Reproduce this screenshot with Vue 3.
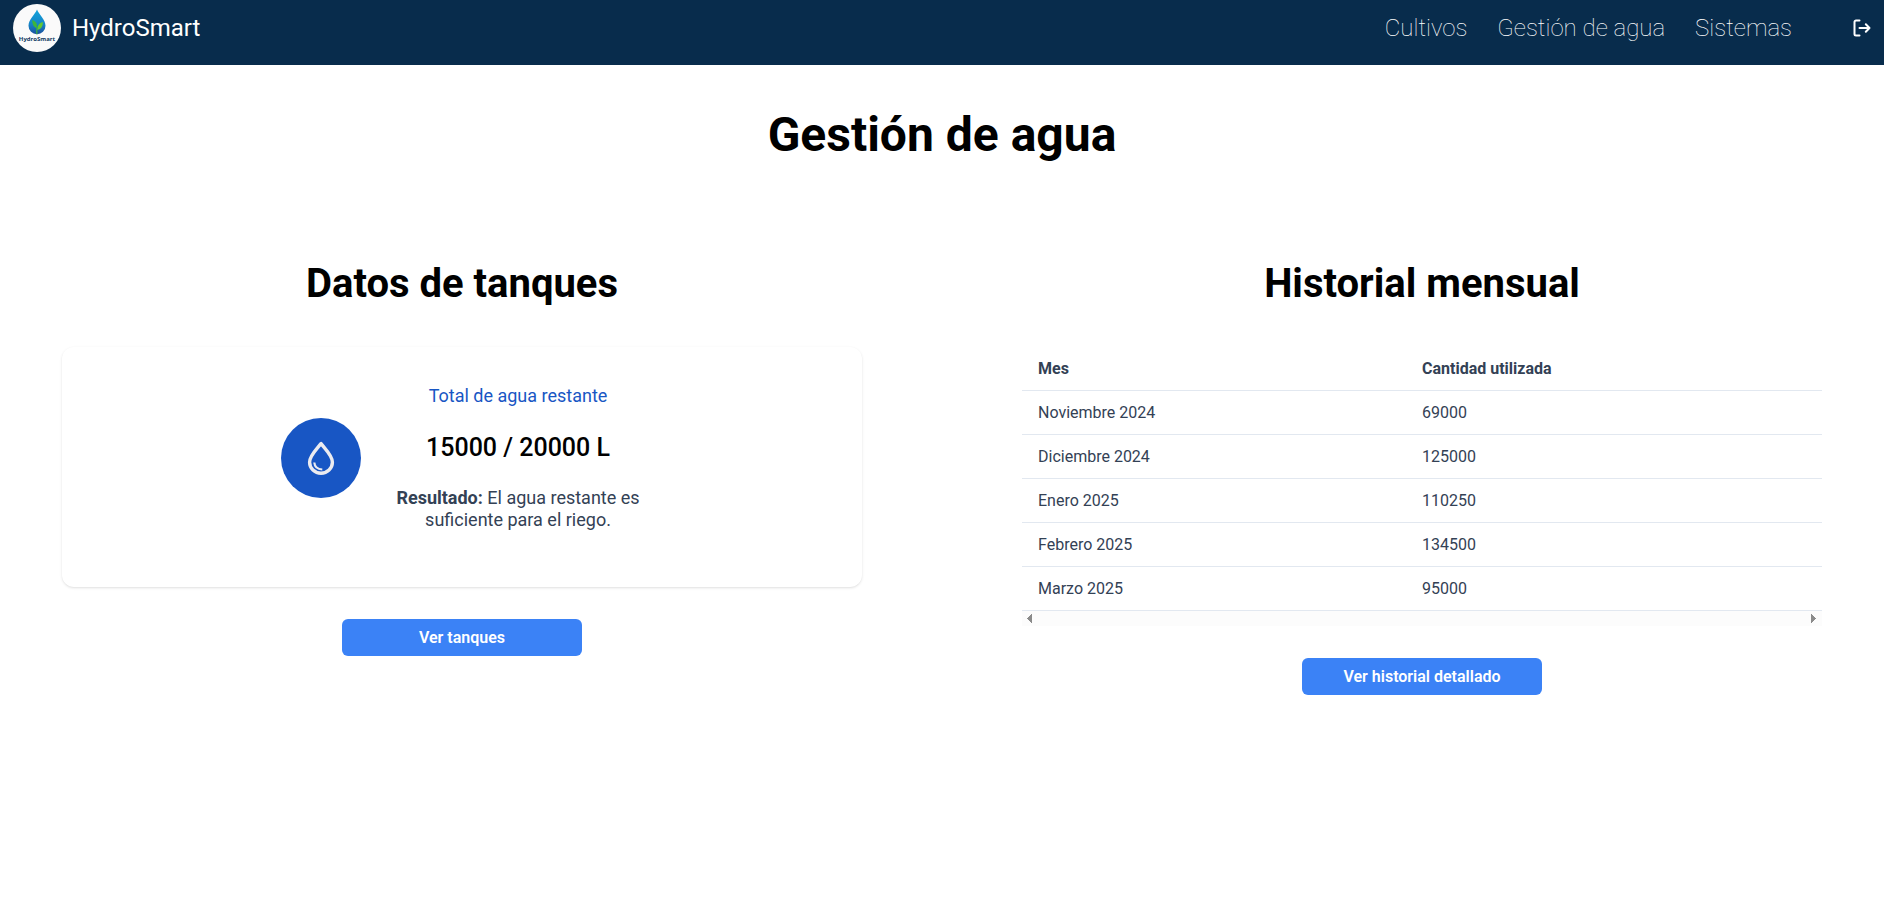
<script setup>
const links = ['Cultivos', 'Gestión de agua', 'Sistemas']

const history = [
  { month: 'Noviembre 2024', amount: 69000 },
  { month: 'Diciembre 2024', amount: 125000 },
  { month: 'Enero 2025', amount: 110250 },
  { month: 'Febrero 2025', amount: 134500 },
  { month: 'Marzo 2025', amount: 95000 },
]
</script>

<template>
  <header class="topbar">
    <a class="brand" href="#">
      <svg class="logo" viewBox="0 0 48 48" aria-hidden="true">
        <defs>
          <linearGradient id="drop" x1="0" y1="0" x2="0" y2="1">
            <stop offset="0" stop-color="#12a5dc" />
            <stop offset="0.6" stop-color="#1583c6" />
            <stop offset="1" stop-color="#1a4f9c" />
          </linearGradient>
        </defs>
        <circle cx="24" cy="24" r="24" fill="#fafafa" />
        <path d="M24 5.500C22 10.500 15.500 15.500 15.500 21.800a8.500 8.500 0 0 0 17 0C32.500 15.500 26 10.500 24 5.500Z" fill="url(#drop)" />
        <path d="M23.800 24C21 23.500 19.200 20.500 19.200 16c3.800 1.200 5.400 4 4.600 8Z" fill="#3cb53c" />
        <path d="M24.300 26c-.3-4 1.700-7 5.500-8 .4 4-1.700 7.200-5.500 8Z" fill="#62c832" />
        <path d="M23.400 30.200c-.3-2.500-.3-4.500.2-7h.9c-.2 2.500-.2 4.500 0 7Z" fill="#3cb53c" />
        <text x="24" y="37" text-anchor="middle" class="logo-text">HydroSmart</text>
      </svg>
      <span>HydroSmart</span>
    </a>
    <nav class="nav">
      <a v-for="link in links" :key="link" href="#">{{ link }}</a>
    </nav>
    <button class="logout" type="button" aria-label="Cerrar sesión">
      <svg viewBox="0 0 18 18" fill="none" stroke="#fff" stroke-width="2" stroke-linecap="round" stroke-linejoin="round">
        <path d="M6.500 1.500H3a1.500 1.500 0 0 0-1.500 1.500v12a1.500 1.500 0 0 0 1.500 1.500H6.500" />
        <path d="M6.500 9H16.500M12.800 5.200 16.500 9l-3.700 3.800" />
      </svg>
    </button>
  </header>

  <main class="page">
    <h1>Gestión de agua</h1>
    <div class="columns">
      <section class="column">
        <h2>Datos de tanques</h2>
        <div class="card">
          <div class="badge">
            <svg viewBox="0 0 32 36" fill="none" stroke="#ebebf0" stroke-linejoin="round">
              <path d="M16 3.600C12.500 8.500 4.600 15.500 4.600 22.200a11.400 11 0 0 0 22.800 0C27.400 15.500 19.500 8.500 16 3.600Z" stroke-width="3.400" />
              <path d="M9.300 22.500c.3 4.200 3 6.700 8 7" stroke-width="2.200" />
            </svg>
          </div>
          <div class="summary">
            <p class="label">Total de agua restante</p>
            <p class="value">15000 / 20000 L</p>
            <p class="result"><strong>Resultado:</strong> El agua restante es suficiente para el riego.</p>
          </div>
        </div>
        <button class="action" type="button">Ver tanques</button>
      </section>

      <section class="column">
        <h2>Historial mensual</h2>
        <div class="history">
          <table>
            <thead>
              <tr>
                <th scope="col">Mes</th>
                <th scope="col">Cantidad utilizada</th>
              </tr>
            </thead>
            <tbody>
              <tr v-for="row in history" :key="row.month">
                <td>{{ row.month }}</td>
                <td>{{ row.amount }}</td>
              </tr>
            </tbody>
          </table>
          <div class="scrollbar" aria-hidden="true">
            <svg viewBox="0 0 5 9"><path d="M5 0V9H4V8H3V7H2V6H1V5H0V4H1V3H2V2H3V1H4V0Z" /></svg>
            <svg viewBox="0 0 5 9"><path d="M0 0V9H1V8H2V7H3V6H4V5H5V4H4V3H3V2H2V1H1V0Z" /></svg>
          </div>
        </div>
        <button class="action" type="button">Ver historial detallado</button>
      </section>
    </div>
  </main>
</template>

<style>
body {
  margin: 0;
  background: #fff;
  font-family: Roboto, "Liberation Sans", sans-serif;
}
</style>

<style scoped>
.topbar {
  display: flex;
  align-items: center;
  padding: 4px 13px 13px;
  background: #082c4c;
  color: #fff;
  font-size: 24px;
  line-height: 28px;
}
.brand {
  display: flex;
  align-items: center;
  gap: 11px;
  margin-right: auto;
  color: #fff;
  text-decoration: none;
}
.logo {
  width: 48px;
  height: 48px;
}
.logo-text {
  font-size: 6px;
  font-weight: 700;
  font-family: "Open Sans", sans-serif;
  fill: #123a63;
}
.nav {
  display: flex;
  gap: 30px;
  margin-right: 61px;
}
.nav a {
  color: #fff;
  font-weight: 100;
  text-decoration: none;
}
.logout {
  display: flex;
  padding: 0;
  border: 0;
  background: none;
  cursor: pointer;
}
.logout svg {
  width: 18px;
  height: 18px;
}
.page {
  padding: 42px 62px 32px;
  text-align: center;
}
h1 {
  margin: 0;
  font-size: 48px;
  line-height: 56px;
  font-weight: 700;
  color: #000;
}
.columns {
  display: grid;
  grid-template-columns: 1fr 1fr;
  gap: 160px;
  margin-top: 97px;
}
.column {
  display: flex;
  flex-direction: column;
  align-items: center;
}
h2 {
  margin: 0 0 40px;
  font-size: 40px;
  line-height: 47px;
  font-weight: 700;
  color: #000;
}
.card {
  display: flex;
  justify-content: center;
  align-items: center;
  gap: 32px;
  box-sizing: border-box;
  width: 100%;
  min-height: 240px;
  padding: 20px;
  border-radius: 12px;
  background: #fff;
  box-shadow: 0 1px 3px rgba(0, 0, 0, 0.1), 0 1px 2px -1px rgba(0, 0, 0, 0.1);
}
.badge {
  display: flex;
  align-items: center;
  justify-content: center;
  width: 80px;
  height: 80px;
  margin-bottom: 18px;
  border-radius: 50%;
  background: #1856c4;
}
.badge svg {
  width: 32px;
  height: 36px;
}
.summary {
  width: 250px;
  margin-bottom: 18px;
  font-size: 18px;
  line-height: 22px;
  color: #334155;
}
.summary p {
  margin: 0;
}
.summary .label {
  color: #1856c4;
}
.summary .value {
  margin: 27px 0 25px;
  font-size: 25px;
  line-height: 28px;
  font-weight: 500;
  color: #000;
}
.history {
  width: 100%;
}
table {
  width: 100%;
  border-collapse: separate;
  border-spacing: 0;
  color: #334155;
  font-size: 16px;
  line-height: 19px;
  text-align: left;
}
th,
td {
  padding: 12px 16px;
  border-bottom: 1px solid #e2e8f0;
}
th {
  font-weight: 700;
}
th:first-child {
  width: 48%;
}
.scrollbar {
  display: flex;
  align-items: center;
  justify-content: space-between;
  height: 15px;
  padding: 0 6px 0 5px;
  background: #fcfcfc;
}
.scrollbar svg {
  width: 5px;
  height: 9px;
  fill: #8b8b8b;
}
.action {
  width: 240px;
  margin-top: 32px;
  padding: 9px 12px;
  border: 0;
  border-radius: 6px;
  background: #3b82f6;
  color: #fff;
  font: 600 16px/19px Roboto, "Liberation Sans", sans-serif;
  cursor: pointer;
}
</style>
